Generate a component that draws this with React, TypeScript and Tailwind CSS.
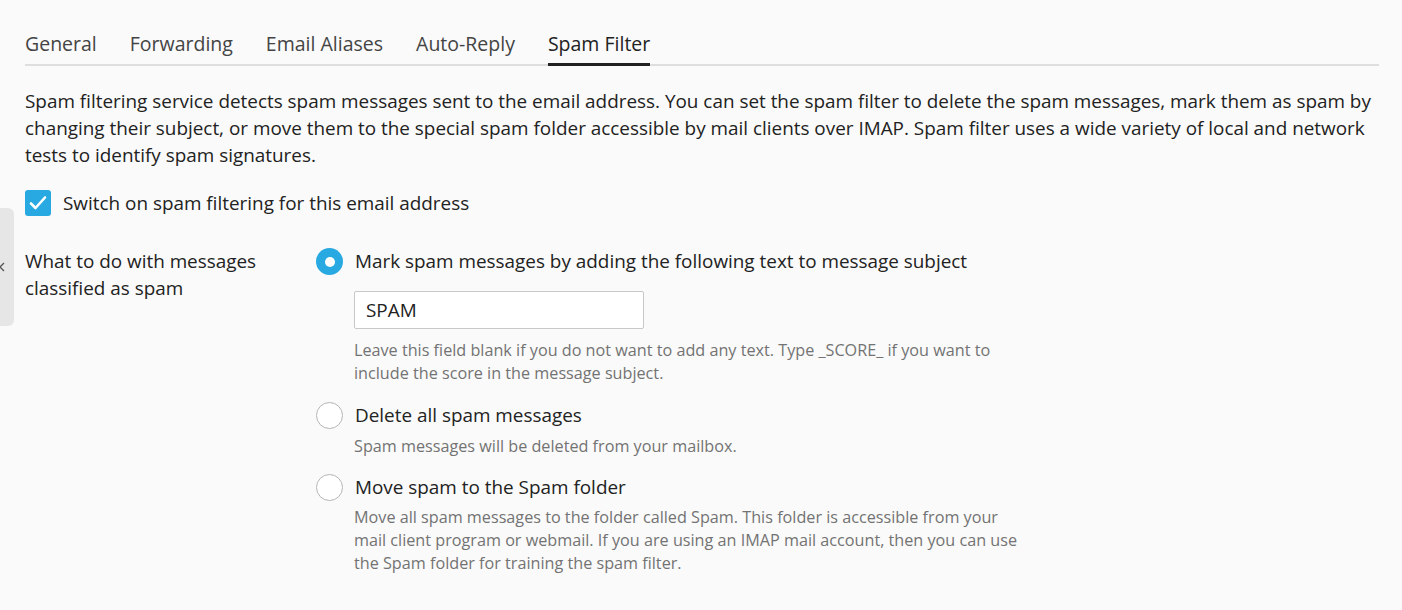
import { useState } from 'react'

const tabs = ['General', 'Forwarding', 'Email Aliases', 'Auto-Reply', 'Spam Filter']

type Option = {
    id: string
    label: string
    hint: string[]
}

const options: Option[] = [
    {
        id: 'mark',
        label: 'Mark spam messages by adding the following text to message subject',
        hint: [
            'Leave this field blank if you do not want to add any text. Type _SCORE_ if you want to',
            'include the score in the message subject.',
        ],
    },
    {
        id: 'delete',
        label: 'Delete all spam messages',
        hint: ['Spam messages will be deleted from your mailbox.'],
    },
    {
        id: 'move',
        label: 'Move spam to the Spam folder',
        hint: [
            'Move all spam messages to the folder called Spam. This folder is accessible from your',
            'mail client program or webmail. If you are using an IMAP mail account, then you can use',
            'the Spam folder for training the spam filter.',
        ],
    },
]

const Radio = ({ checked }: { checked: boolean }) => (
    checked ? (
        <span className="flex h-[27px] w-[27px] shrink-0 items-center justify-center rounded-full bg-[#28a9e1]">
            <span className="h-[10px] w-[10px] rounded-full bg-white" />
        </span>
    ) : (
        <span className="h-[27px] w-[27px] shrink-0 rounded-full border border-[#b5b5b5] bg-white" />
    )
)

export default function App() {
    const [active] = useState('Spam Filter')
    const [enabled, setEnabled] = useState(true)
    const [mode, setMode] = useState('mark')
    const [subject, setSubject] = useState('SPAM')

    return (
        <div className="relative h-[610px] w-[1402px] overflow-hidden bg-[#fafafa] font-['Open_Sans',sans-serif] text-[#222]">
            {/* collapsed side panel handle */}
            <div className="absolute left-0 top-[208px] flex h-[118px] w-[14px] items-center rounded-r-md bg-[#e6e6e6]">
                <svg width="8" height="10" viewBox="0 0 8 10" className="-ml-[1px]">
                    <path d="M5 1 L1 5 L5 9" fill="none" stroke="#555" strokeWidth="1.3" />
                </svg>
            </div>

            <div className="pl-[25px] pr-[23px] pt-[30px]">
                <div className="flex gap-[33px] border-b-2 border-[#dedede]">
                    {tabs.map((t) => (
                        <div
                            key={t}
                            className={
                                t === active
                                    ? '-mb-[2px] border-b-[3px] border-[#222] pb-[5px] text-[19.5px] leading-[28px] text-[#222]'
                                    : 'pb-[6px] text-[19.5px] leading-[28px] text-[#444]'
                            }
                        >
                            {t}
                        </div>
                    ))}
                </div>

                <p className="mt-[22px] text-[18.9px] leading-[27px] text-[#222]">
                    Spam filtering service detects spam messages sent to the email address. You can set the spam filter to delete the spam messages, mark them as spam by changing their subject, or move them to the special spam folder accessible by mail clients over IMAP. Spam filter uses a wide variety of local and network tests to identify spam signatures.
                </p>

                <label className="mt-[21px] flex cursor-pointer items-center gap-[12px]" onClick={() => setEnabled(!enabled)}>
                    <span className="flex h-[26px] w-[26px] items-center justify-center rounded-[3px] bg-[#28a9e1]">
                        {enabled && (
                            <svg width="18" height="16" viewBox="0 0 18 16">
                                <path d="M2 8.5 L6.5 13 L16 2.5" fill="none" stroke="#fff" strokeWidth="2.6" strokeLinecap="round" strokeLinejoin="round" />
                            </svg>
                        )}
                    </span>
                    <span className="text-[18.9px] leading-[26px]">Switch on spam filtering for this email address</span>
                </label>

                <div className="mt-[32px] flex">
                    <div className="w-[291px] text-[18.9px] leading-[27px]">
                        What to do with messages
                        <br />
                        classified as spam
                    </div>
                    <div className="flex flex-col">
                        {options.map((o, i) => (
                            <div key={o.id} className={i === 0 ? '' : i === 1 ? 'mt-[17px]' : 'mt-[16px]'}>
                                <div className="flex cursor-pointer items-center gap-[12px]" onClick={() => setMode(o.id)}>
                                    <Radio checked={mode === o.id} />
                                    <span className="text-[18.9px] leading-[27px]">{o.label}</span>
                                </div>
                                <div className="pl-[38px]">
                                    {o.id === 'mark' && (
                                        <input
                                            value={subject}
                                            onChange={(e) => setSubject(e.target.value)}
                                            className="mt-[16px] h-[38px] w-[290px] rounded-[2px] border border-[#c8c8c8] bg-white px-[11px] text-[18.9px] text-[#222] outline-none"
                                        />
                                    )}
                                    <div className={o.id === 'mark' ? 'mt-[10px] text-[16.2px] leading-[23px] text-[#737373]' : o.id === 'delete' ? 'mt-[6px] text-[16.2px] leading-[23px] text-[#737373]' : 'mt-[5px] text-[16.2px] leading-[23px] text-[#737373]'}>
                                        {o.hint.map((h) => (
                                            <div key={h}>{h}</div>
                                        ))}
                                    </div>
                                </div>
                            </div>
                        ))}
                    </div>
                </div>
            </div>
        </div>
    )
}
